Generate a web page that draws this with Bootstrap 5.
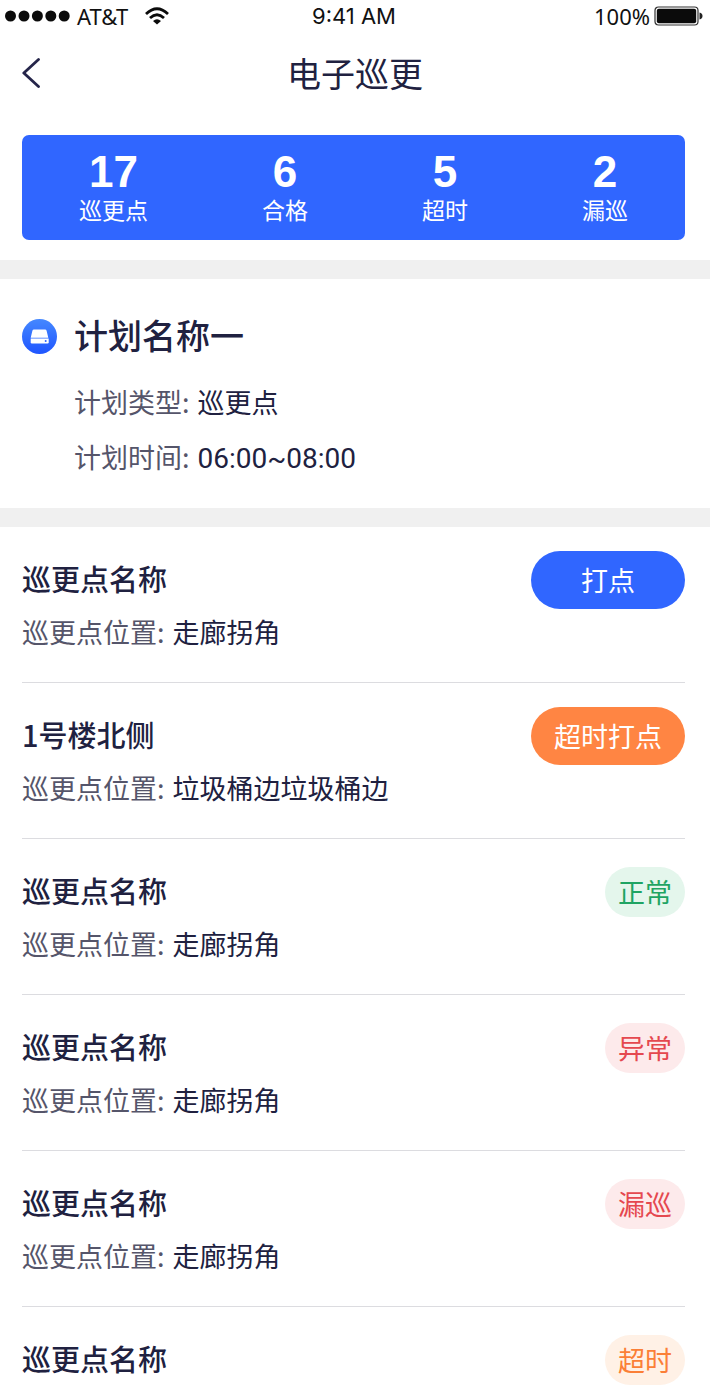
<!DOCTYPE html>
<html lang="zh-CN">
<head>
<meta charset="utf-8">
<meta name="viewport" content="width=device-width, initial-scale=1">
<title>电子巡更</title>
<link rel="stylesheet" href="https://cdn.jsdelivr.net/npm/bootstrap@5.3.0/dist/css/bootstrap.min.css">
<style>
  body { font-family: "Noto Sans CJK SC", sans-serif; color: #202140; background: #fff; font-size: 27px; line-height: 40px; }
  .status-bar { height: 32px; padding: 0 7px 0 5px; font-size: 22px; line-height: 32px; color: #111; }
  .status-bar > div { flex: 1 1 0; }
  .carrier { gap: 6px; }
  .latin { font-family: "Noto Sans", sans-serif; }
  .clock { font-family: Inter, sans-serif; }
  .title-bar { height: 82px; margin-bottom: 21px; padding: 0 22px; }
  .title-bar h1 { font-size: 34px; line-height: 50px; font-weight: 400; }
  .side { flex: 1 1 0; }
  .gutter { margin-left: 22px; margin-right: 25px; }
  .stats { background: #3066ff; border-radius: 7px; height: 105px; margin-bottom: 20px; padding-top: 15px; }
  .stats dd { font: bold 44px/44px "Liberation Sans", Arial, sans-serif; }
  .stats dt { font-size: 23px; line-height: 30px; font-weight: 400; }
  .band { height: 19px; background: #f0f0f0; }
  .plan { padding: 31px 0 29px; gap: 17px; }
  .plan-icon { margin-top: 9px; }
  .plan h2 { font-size: 34px; line-height: 50px; font-weight: 500; margin-bottom: 22px; }
  .plan p { line-height: 40px; margin-bottom: 15px; }
  .plan p:last-child { margin-bottom: 0; }
  .caption { color: #55556a; margin-right: 8px; }
  .hours { font-family: Roboto, sans-serif; font-size: 28px; }
  .point { min-height: 156px; padding-top: 24px; border-bottom: 1px solid #dcdce0; }
  .point:last-child { min-height: 85px; border: 0; }
  .point h3 { font-size: 29px; line-height: 44px; font-weight: 500; margin: 5px 0 12px; }
  .punch { width: 154px; height: 58px; border: 0; border-radius: 29px; padding: 0; font-size: 27px; line-height: 40px; color: #fff; }
  .punch-now { background: #3066ff; }
  .punch-late { background: #ff8543; }
  .state { height: 50px; border-radius: 25px; padding: 5px 13px; margin-top: 4px; }
  .state-ok { background: #e4f6ec; color: #1fa463; }
  .state-bad { background: #fdeaeb; color: #e5484f; }
  .state-late { background: #fff1e6; color: #fb7f37; }
</style>
</head>
<body>
<header>
  <div class="status-bar d-flex align-items-center">
    <div class="carrier d-flex align-items-center">
      <svg width="66" height="12" viewBox="0 0 66 12" fill="#0b0b0b" aria-hidden="true"><circle cx="5.500" cy="6" r="5.500"/><circle cx="19" cy="6" r="5.500"/><circle cx="32.400" cy="6" r="5.500"/><circle cx="45.800" cy="6" r="5.500"/><circle cx="59.200" cy="6" r="5.500"/></svg>
      <span class="latin">AT&amp;T</span>
      <svg class="ms-2" width="28" height="20" viewBox="-2 0 28 20" fill="none" stroke="#0b0b0b" stroke-width="2.800" aria-hidden="true"><path d="M2 8Q13-2.500 24 8"/><path d="M6 12Q13 5.500 20 12"/><path d="M9 15Q13 11.500 17 15L13 18.500Z" fill="#0b0b0b" stroke="none"/></svg>
    </div>
    <span class="clock">9:41 AM</span>
    <div class="d-flex align-items-center justify-content-end">
      <span class="latin me-1">100%</span>
      <svg width="49" height="20" viewBox="0 0 49 20" aria-hidden="true"><rect x="1" y="1" width="43" height="18" rx="3.500" fill="#fff" stroke="#333" stroke-width="1.200"/><rect x="2.800" y="2.800" width="39.400" height="14.400" rx="2" fill="#0b0b0b"/><path d="M45.500 6.500q3 .8 3 3.500t-3 3.500z" fill="#222"/></svg>
    </div>
  </div>
  <nav class="title-bar d-flex align-items-center" aria-label="页面导航">
    <div class="side d-flex"><a href="#" aria-label="返回" class="d-flex"><svg width="20" height="32" viewBox="0 0 20 32" fill="none" stroke="#25254a" stroke-width="2.800" stroke-linecap="round" stroke-linejoin="round"><path d="M16.500 2.500L1.800 16l14.700 13.500"/></svg></a></div>
    <h1 class="m-0">电子巡更</h1>
    <div class="side"></div>
  </nav>
</header>
<main>
  <dl class="stats gutter mt-0 d-flex justify-content-around text-white text-center">
    <div class="d-flex flex-column-reverse justify-content-end"><dt>巡更点</dt><dd class="m-0">17</dd></div>
    <div class="d-flex flex-column-reverse justify-content-end"><dt>合格</dt><dd class="m-0">6</dd></div>
    <div class="d-flex flex-column-reverse justify-content-end"><dt>超时</dt><dd class="m-0">5</dd></div>
    <div class="d-flex flex-column-reverse justify-content-end"><dt>漏巡</dt><dd class="m-0">2</dd></div>
  </dl>
  <div class="band"></div>
  <section class="plan gutter d-flex align-items-start">
    <svg class="plan-icon flex-shrink-0" width="35" height="35" viewBox="0 0 35 35" aria-hidden="true"><defs><linearGradient id="disc" x2="0" y2="1"><stop stop-color="#4588ff"/><stop offset="1" stop-color="#1f55ff"/></linearGradient></defs><circle cx="17.500" cy="17.500" r="17.500" fill="url(#disc)"/><path d="M12 10.500h11q1.300 0 1.600 1.300l1.700 7H8.700l1.700-7q.3-1.300 1.600-1.300z" fill="#fff"/><path d="M8.700 19.600h18v3.700q0 1.200-1.200 1.200H9.900q-1.200 0-1.200-1.200z" fill="#fff"/><circle cx="23.700" cy="22" r="1" fill="#2f66ff"/></svg>
    <div>
      <h2>计划名称一</h2>
      <p><span class="caption">计划类型:</span>巡更点</p>
      <p><span class="caption">计划时间:</span><span class="hours">06:00~08:00</span></p>
    </div>
  </section>
  <div class="band"></div>
  <ul class="list-unstyled gutter my-0">
    <li class="point d-flex justify-content-between align-items-start"><div><h3>巡更点名称</h3><span class="caption">巡更点位置:</span>走廊拐角</div><button type="button" class="punch punch-now">打点</button></li>
    <li class="point d-flex justify-content-between align-items-start"><div><h3>1号楼北侧</h3><span class="caption">巡更点位置:</span>垃圾桶边垃圾桶边</div><button type="button" class="punch punch-late">超时打点</button></li>
    <li class="point d-flex justify-content-between align-items-start"><div><h3>巡更点名称</h3><span class="caption">巡更点位置:</span>走廊拐角</div><span class="state state-ok">正常</span></li>
    <li class="point d-flex justify-content-between align-items-start"><div><h3>巡更点名称</h3><span class="caption">巡更点位置:</span>走廊拐角</div><span class="state state-bad">异常</span></li>
    <li class="point d-flex justify-content-between align-items-start"><div><h3>巡更点名称</h3><span class="caption">巡更点位置:</span>走廊拐角</div><span class="state state-bad">漏巡</span></li>
    <li class="point d-flex justify-content-between align-items-start"><div><h3 class="mb-0">巡更点名称</h3></div><span class="state state-late">超时</span></li>
  </ul>
</main>
<script src="https://cdn.jsdelivr.net/npm/bootstrap@5.3.0/dist/js/bootstrap.bundle.min.js"></script>
</body>
</html>
